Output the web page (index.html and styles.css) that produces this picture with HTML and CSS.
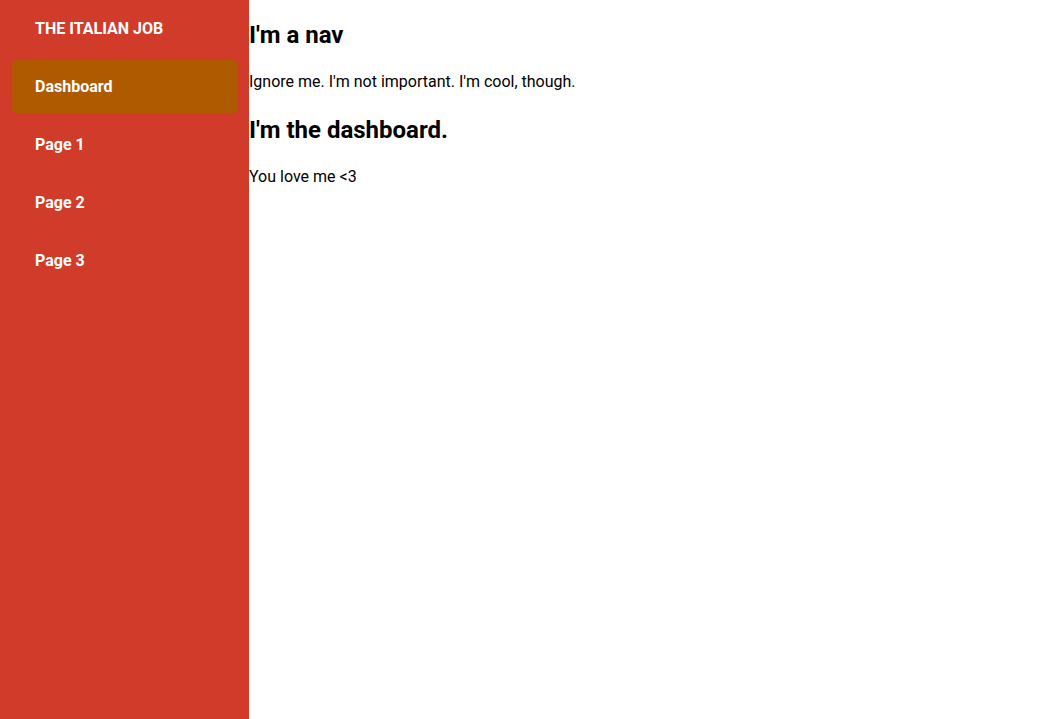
FILE: index.html
```html
<!DOCTYPE html>
<html>
<head>
<meta charset="utf-8">
<title>The Italian Job</title>
<link rel="stylesheet" href="styles.css">
</head>
<body>
<div class="app">
  <aside class="sidebar">
    <div class="brand">THE ITALIAN JOB</div>
    <a class="nav-item active" href="#">Dashboard</a>
    <a class="nav-item" href="#">Page 1</a>
    <a class="nav-item" href="#">Page 2</a>
    <a class="nav-item" href="#">Page 3</a>
  </aside>
  <main class="content">
    <section class="nav-section">
      <h2>I'm a nav</h2>
      <p>Ignore me. I'm not important. I'm cool, though.</p>
    </section>
    <section class="dash-section">
      <h2>I'm the dashboard.</h2>
      <p>You love me &lt;3</p>
    </section>
  </main>
</div>
</body>
</html>
```
FILE: styles.css
```css
html, body {
  margin: 0;
  padding: 0;
  height: 100%;
}
body {
  font-family: Roboto, "Noto Sans", sans-serif;
  color: #000;
  background: #fff;
}
.app {
  display: flex;
  height: 100%;
}
.sidebar {
  width: 249px;
  flex-shrink: 0;
  background: #d03c29;
  padding: 2px 12px 0;
  box-sizing: border-box;
  display: flex;
  flex-direction: column;
  gap: 5px;
}
.brand,
.nav-item {
  display: flex;
  align-items: center;
  height: 53px;
  padding: 0 23px;
  color: #fff;
  font-weight: 700;
  font-size: 16px;
  text-decoration: none;
  border-radius: 4px;
}
.nav-item.active {
  background: #b05a00;
}
.content {
  flex: 1;
}
.content h2 {
  font-size: 24px;
  line-height: 30px;
  font-weight: 700;
  margin: 20px 0;
}
.content p {
  font-size: 16px;
  line-height: 24px;
  margin: 16px 0;
}
.dash-section h2 {
  margin-top: 21px;
}
```
